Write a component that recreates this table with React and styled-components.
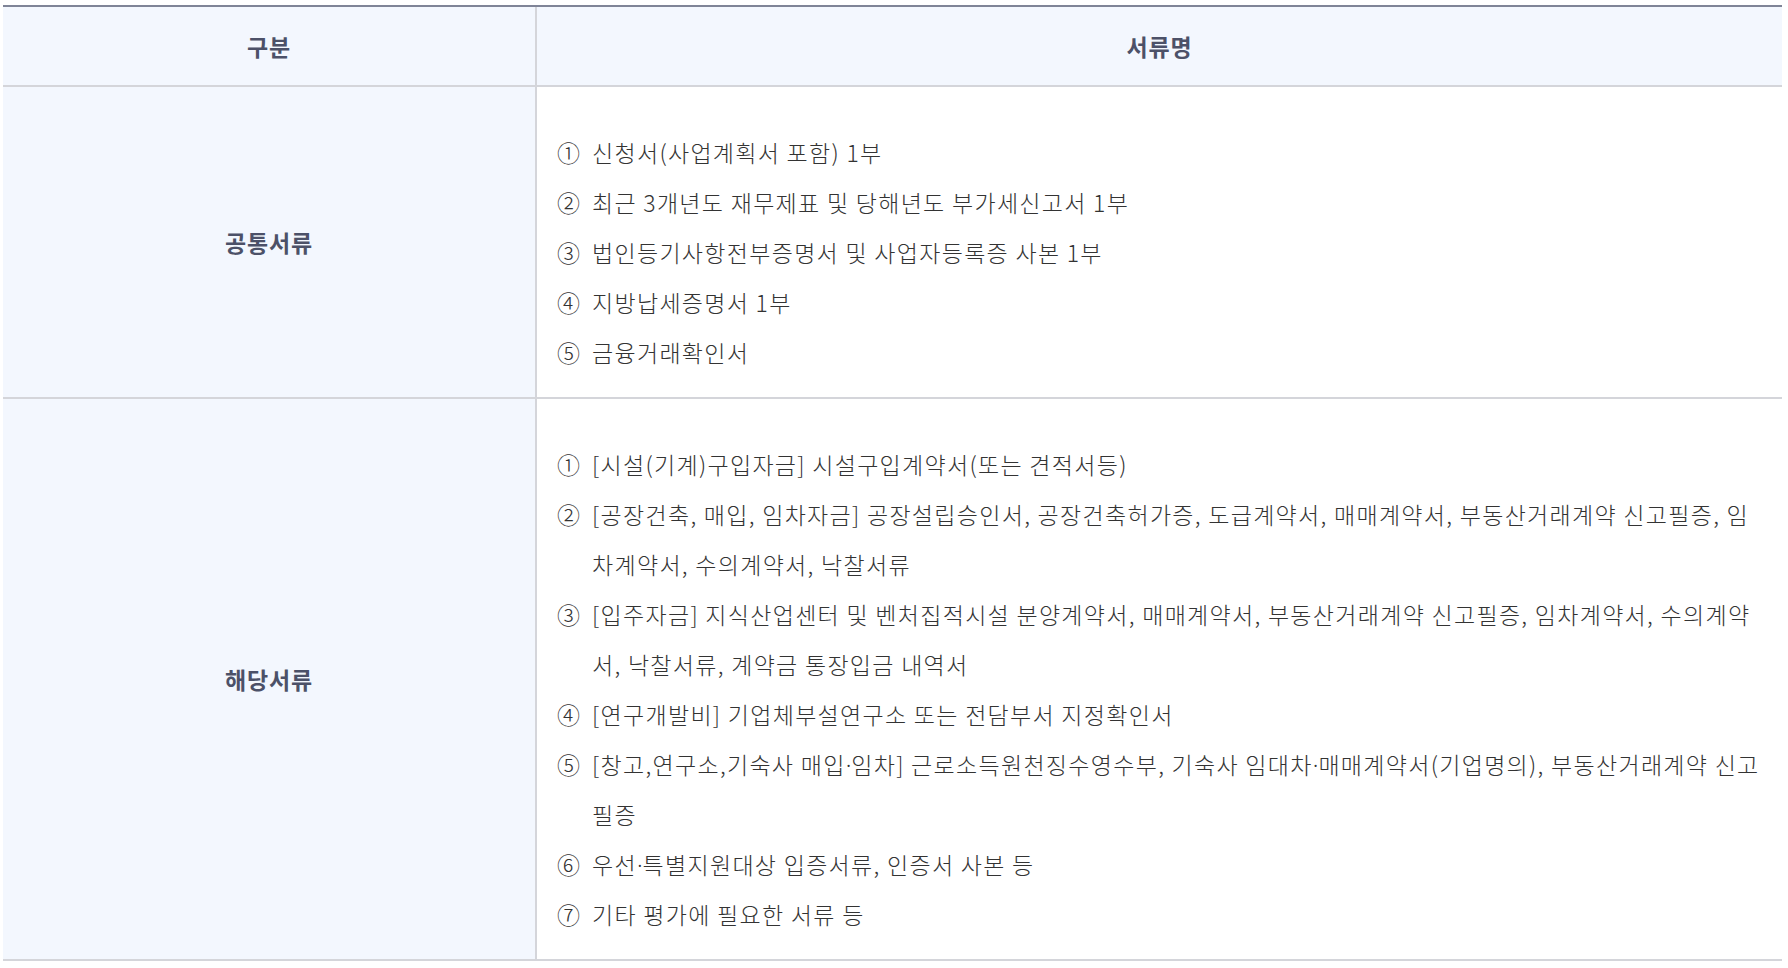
import React from "react";
import styled, { createGlobalStyle } from "styled-components";

const GlobalStyle = createGlobalStyle`
  html, body { margin: 0; padding: 0; background: #ffffff; }
  body { font-family: "Noto Sans CJK KR", "Noto Sans", sans-serif; }
`;

const Wrapper = styled.div`
  padding: 5px 6px 0 3px;
`;

const Table = styled.table`
  width: 100%;
  border-collapse: separate;
  border-spacing: 0;
  border-top: 2px solid #7f8497;
  table-layout: fixed;
  font-family: "Noto Sans CJK KR", "Noto Sans", sans-serif;
`;

const HeadCell = styled.th`
  height: 78px;
  padding: 0;
  background: #f3f7fe;
  color: #4c5168;
  font-size: 23px;
  letter-spacing: 0.9px;
  font-weight: 700;
  text-align: center;
  vertical-align: middle;
  border-bottom: 2px solid #d4d5da;
  ${(p) => (p.$first ? "border-right: 2px solid #d4d5da;" : "")}
`;

const CategoryCell = styled.td`
  background: #f3f7fe;
  color: #4c5168;
  font-size: 23px;
  letter-spacing: 0.9px;
  font-weight: 700;
  text-align: center;
  vertical-align: middle;
  padding: 0;
  border-right: 2px solid #d4d5da;
  border-bottom: 2px solid #d4d5da;
`;

const DocCell = styled.td`
  background: #ffffff;
  vertical-align: top;
  padding: 40px 14px 20px 20px;
  border-bottom: 2px solid #d4d5da;
`;

const DocList = styled.ul`
  list-style: none;
  margin: 0;
  padding: 0;
`;

const DocItem = styled.li`
  display: flex;
  align-items: flex-start;
  font-size: 23px;
  font-weight: 300;
  letter-spacing: 1.3px;
  line-height: 50px;
  color: #333333;
`;

const Num = styled.span`
  flex: 0 0 35px;
  width: 35px;
  letter-spacing: 0;
`;

const Text = styled.span`
  flex: 1 1 auto;
  min-width: 0;
`;

const Dot = styled.span`
  font-family: "Noto Sans", "Liberation Sans", sans-serif;
  letter-spacing: 0;
  line-height: 0;
`;

const common = [
  "신청서(사업계획서 포함) 1부",
  "최근 3개년도 재무제표 및 당해년도 부가세신고서 1부",
  "법인등기사항전부증명서 및 사업자등록증 사본 1부",
  "지방납세증명서 1부",
  "금융거래확인서",
];

const specific = [
  "[시설(기계)구입자금] 시설구입계약서(또는 견적서등)",
  "[공장건축, 매입, 임차자금] 공장설립승인서, 공장건축허가증, 도급계약서, 매매계약서, 부동산거래계약 신고필증, 임차계약서, 수의계약서, 낙찰서류",
  "[입주자금] 지식산업센터 및 벤처집적시설 분양계약서, 매매계약서, 부동산거래계약 신고필증, 임차계약서, 수의계약서, 낙찰서류, 계약금 통장입금 내역서",
  "[연구개발비] 기업체부설연구소 또는 전담부서 지정확인서",
  "[창고,연구소,기숙사 매입·임차] 근로소득원천징수영수부, 기숙사 임대차·매매계약서(기업명의), 부동산거래계약 신고필증",
  "우선·특별지원대상 입증서류, 인증서 사본 등",
  "기타 평가에 필요한 서류 등",
];

const marks = ["①", "②", "③", "④", "⑤", "⑥", "⑦"];

const rows = [
  { category: "공통서류", items: common },
  { category: "해당서류", items: specific },
];

function renderText(text) {
  const parts = text.split("·");
  return parts.map((part, i) => (
    <React.Fragment key={i}>
      {i > 0 && <Dot>·</Dot>}
      {part}
    </React.Fragment>
  ));
}

export default function App() {
  return (
    <>
      <GlobalStyle />
      <Wrapper>
        <Table>
          <colgroup>
            <col style={{ width: "534px" }} />
            <col />
          </colgroup>
          <thead>
            <tr>
              <HeadCell $first>구분</HeadCell>
              <HeadCell>서류명</HeadCell>
            </tr>
          </thead>
          <tbody>
            {rows.map((row) => (
              <tr key={row.category}>
                <CategoryCell>{row.category}</CategoryCell>
                <DocCell>
                  <DocList>
                    {row.items.map((item, i) => (
                      <DocItem key={i}>
                        <Num>{marks[i]}</Num>
                        <Text>{renderText(item)}</Text>
                      </DocItem>
                    ))}
                  </DocList>
                </DocCell>
              </tr>
            ))}
          </tbody>
        </Table>
      </Wrapper>
    </>
  );
}
